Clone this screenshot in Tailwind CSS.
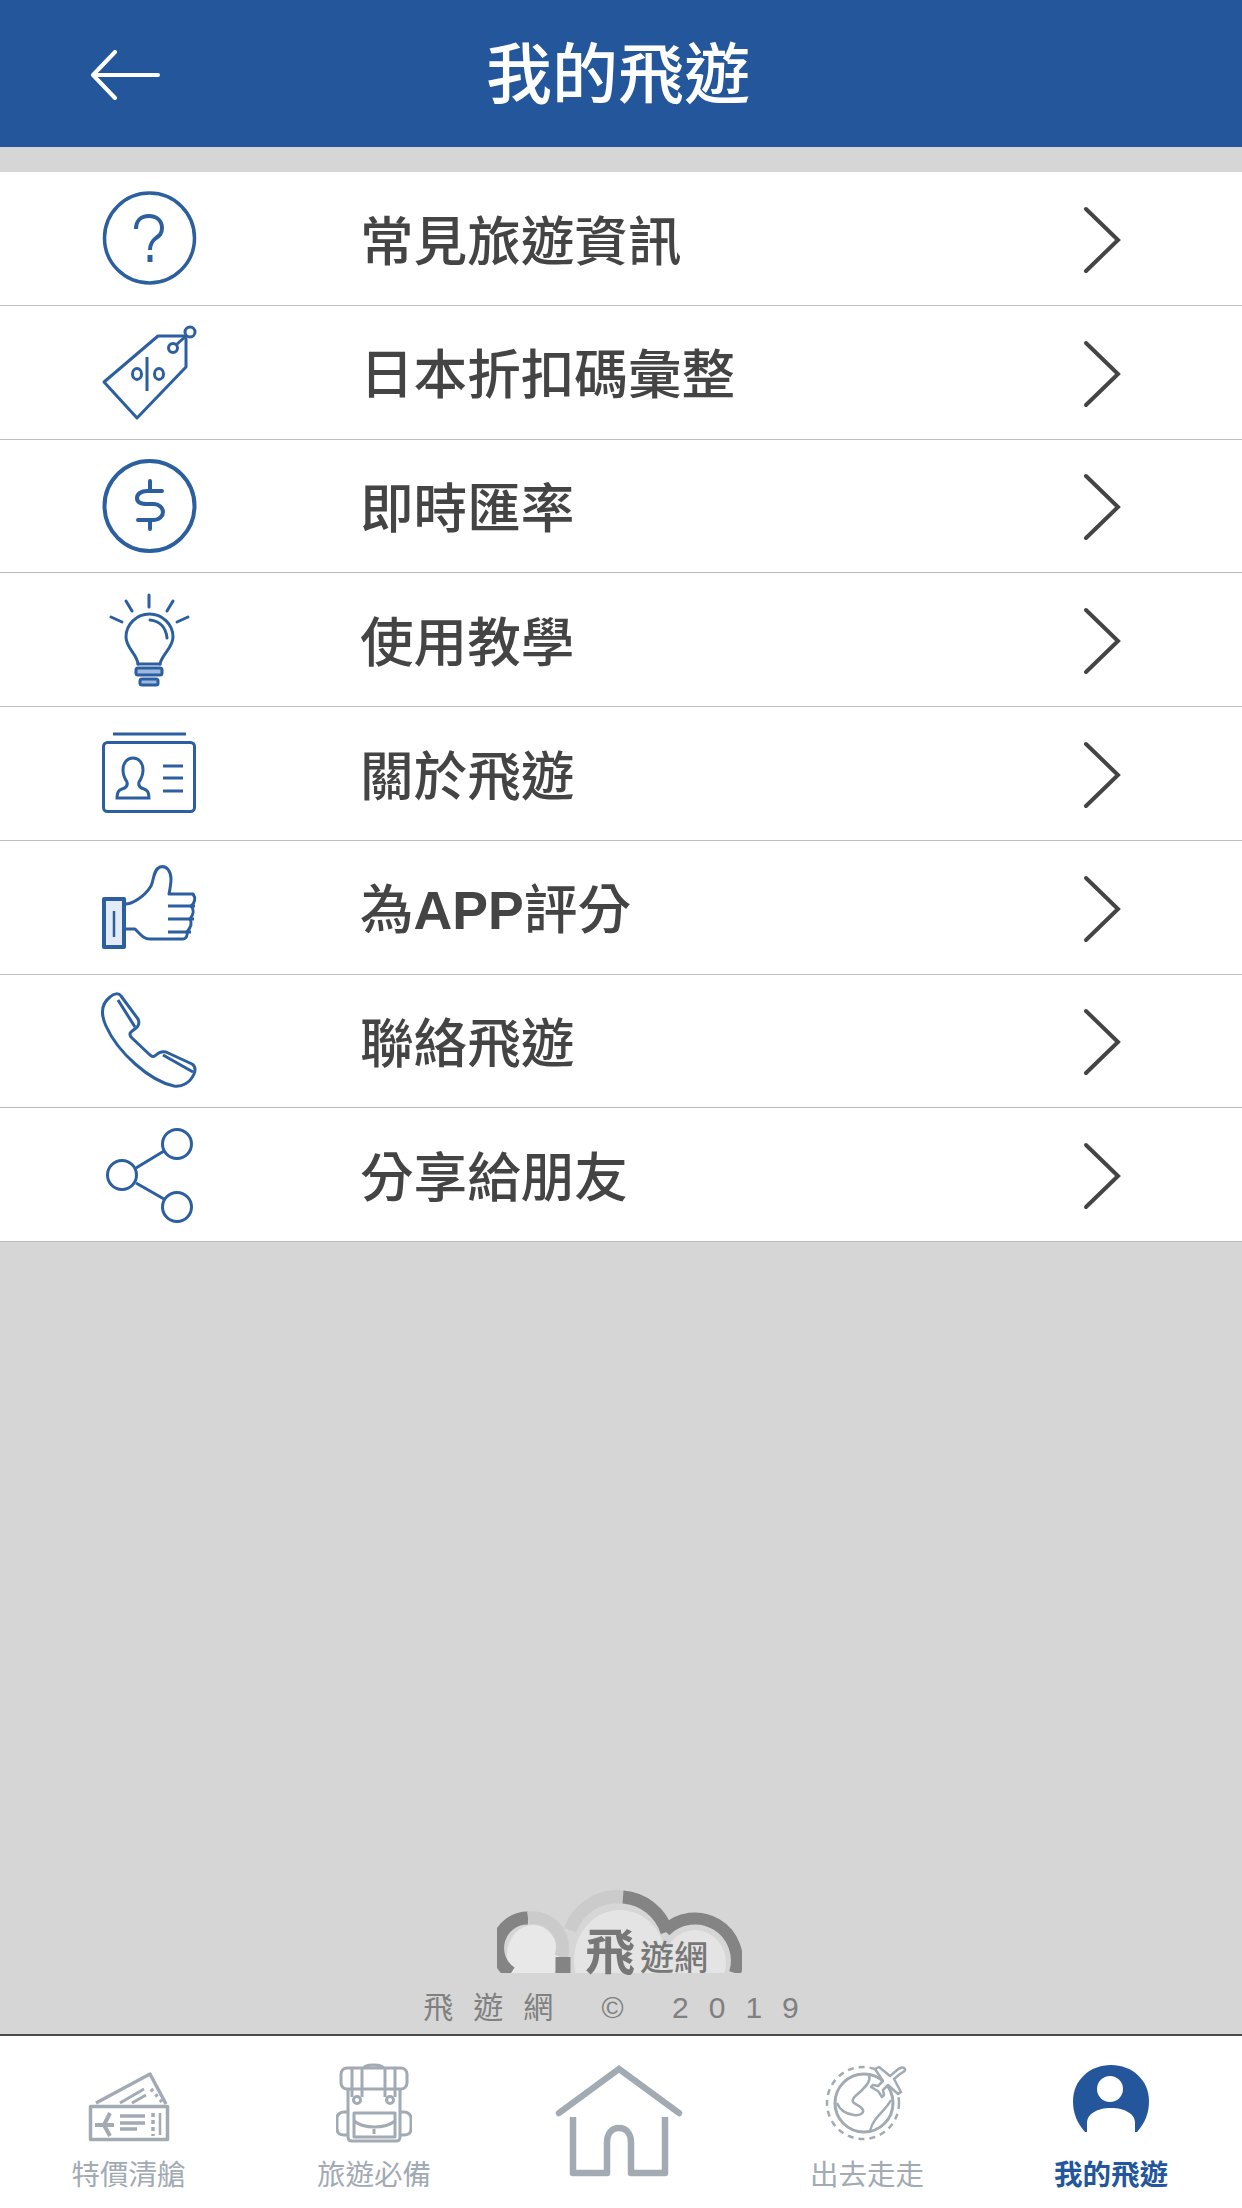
<!DOCTYPE html>
<html lang="zh-Hant">
<head>
  <meta charset="UTF-8" />
  <title>我的飛遊</title>
  <script src="https://cdn.jsdelivr.net/npm/@tailwindcss/browser@4"></script>
</head>
<body class="w-[1242px] h-[2208px] overflow-hidden bg-[#d6d6d6] font-['Liberation_Sans','Noto_Sans_CJK_TC',sans-serif]">
  <div class="flex flex-col h-[2208px]">

    <!-- header -->
    <header class="relative h-[147px] shrink-0 bg-[#23569b] flex items-center justify-center text-white">
      <svg class="absolute left-[90px] top-[50px] w-[70px] h-[50px]" viewBox="0 0 70 50" fill="none" stroke="#fff" stroke-width="4" stroke-linecap="round" stroke-linejoin="round"><path d="M68 25H3M25 2 3 25l22 23"/></svg>
      <h1 class="text-[66px] font-medium leading-none pt-[2px] -ml-[6px]">我的飛遊</h1>
    </header>

    <!-- menu -->
    <ul class="mt-[25px] bg-white shrink-0">
      <li class="h-[133.75px] flex items-center border-b border-[#bdbdbd]">
        <div class="w-[360px] pl-[100px] shrink-0">
          <svg class="block w-[100px] h-[100px]" viewBox="0 0 100 100" fill="none" stroke="#2c5f9f" stroke-width="3.5"><circle cx="49.5" cy="50" r="45"/><path d="M36 41c0-8 5-13 13-13s13 5 13 12c0 6-3 8-6 10-4 3-6 6-6 12" stroke-width="4"/><path d="M50 67v7" stroke-width="5"/></svg>
        </div>
        <span class="flex-1 text-[53.6px] text-[#444] font-medium leading-none pt-[8px]">常見旅遊資訊</span>
        <svg class="w-[40px] h-[70px] mr-[120px] mt-[3px]" viewBox="0 0 40 70" fill="none" stroke="#444" stroke-width="4" stroke-linecap="round"><path d="M4 4l32 31L4 66"/></svg>
      </li>
      <li class="h-[133.75px] flex items-center border-b border-[#bdbdbd]">
        <div class="w-[360px] pl-[100px] shrink-0">
          <svg class="block w-[100px] h-[100px]" viewBox="0 0 100 100" fill="none" stroke="#2c5f9f" stroke-width="3" stroke-linejoin="round"><path d="M58 14H84l2 3V45L37 96 4 60z"/><circle cx="73" cy="26" r="4.500"/><circle cx="90" cy="10" r="5"/><path d="M76 23l10-9"/><path d="M47 35v34"/><ellipse cx="37" cy="52" rx="4.500" ry="5.500"/><ellipse cx="59" cy="52" rx="4.500" ry="5.500"/></svg>
        </div>
        <span class="flex-1 text-[53.6px] text-[#444] font-medium leading-none pt-[8px]">日本折扣碼彙整</span>
        <svg class="w-[40px] h-[70px] mr-[120px] mt-[3px]" viewBox="0 0 40 70" fill="none" stroke="#444" stroke-width="4" stroke-linecap="round"><path d="M4 4l32 31L4 66"/></svg>
      </li>
      <li class="h-[133.75px] flex items-center border-b border-[#bdbdbd]">
        <div class="w-[360px] pl-[100px] shrink-0">
          <svg class="block w-[100px] h-[100px]" viewBox="0 0 100 100" fill="none" stroke="#2c5f9f" stroke-width="4" stroke-linecap="round"><circle cx="49.5" cy="50" r="45"/><path d="M62 35H47c-6 0-10 3-10 7s4 6 10 6h7c5 0 9 4 9 8s-4 8-9 8H38"/><path d="M50 25v10M50 64v9"/></svg>
        </div>
        <span class="flex-1 text-[53.6px] text-[#444] font-medium leading-none pt-[8px]">即時匯率</span>
        <svg class="w-[40px] h-[70px] mr-[120px] mt-[3px]" viewBox="0 0 40 70" fill="none" stroke="#444" stroke-width="4" stroke-linecap="round"><path d="M4 4l32 31L4 66"/></svg>
      </li>
      <li class="h-[133.75px] flex items-center border-b border-[#bdbdbd]">
        <div class="w-[360px] pl-[100px] shrink-0">
          <svg class="block w-[100px] h-[100px]" viewBox="0 0 100 100" fill="none" stroke="#2c5f9f" stroke-width="3" stroke-linecap="round"><path d="M49 5v12M26 11l6 10M73 11l-6 10M11 27l11 5M88 27l-11 5"/><path d="M38 74C37 64 26 58 26 47 26 34 37 24 49.500 24 62 24 73 34 73 47 73 58 62 64 60 74"/><path d="M50 30c10 1 16 8 17 18"/><path d="M38 74h22"/><rect x="36" y="78" width="26" height="7" rx="2" fill="#9db9dd"/><rect x="40" y="89" width="18" height="6" rx="2" fill="#9db9dd"/></svg>
        </div>
        <span class="flex-1 text-[53.6px] text-[#444] font-medium leading-none pt-[8px]">使用教學</span>
        <svg class="w-[40px] h-[70px] mr-[120px] mt-[3px]" viewBox="0 0 40 70" fill="none" stroke="#444" stroke-width="4" stroke-linecap="round"><path d="M4 4l32 31L4 66"/></svg>
      </li>
      <li class="h-[133.75px] flex items-center border-b border-[#bdbdbd]">
        <div class="w-[360px] pl-[100px] shrink-0">
          <svg class="block w-[100px] h-[100px]" viewBox="0 0 100 100" fill="none" stroke="#2c5f9f" stroke-width="3"><path d="M13 11h73"/><rect x="3.500" y="19.500" width="91" height="69" rx="4"/><path d="M43 47c0-7-4-12-10-12s-10 5-10 12c0 5 2 9 4 12 1 4-1 6-5 7-4 1-5 4-5 9h32c0-5-1-8-5-9-4-1-6-3-5-7 2-3 4-7 4-12z"/><path d="M63 43h20M63 55h20M63 68h20"/></svg>
        </div>
        <span class="flex-1 text-[53.6px] text-[#444] font-medium leading-none pt-[8px]">關於飛遊</span>
        <svg class="w-[40px] h-[70px] mr-[120px] mt-[3px]" viewBox="0 0 40 70" fill="none" stroke="#444" stroke-width="4" stroke-linecap="round"><path d="M4 4l32 31L4 66"/></svg>
      </li>
      <li class="h-[133.75px] flex items-center border-b border-[#bdbdbd]">
        <div class="w-[360px] pl-[100px] shrink-0">
          <svg class="block w-[100px] h-[100px]" viewBox="0 0 100 100" fill="none" stroke="#2c5f9f" stroke-width="3" stroke-linejoin="round"><rect x="4" y="42" width="20" height="48" fill="#e2ebf7" stroke-width="4"/><path d="M14 54v26" stroke-width="2.500"/><path d="M25 47c8 0 20-8 26-18 3-6 2-16 9-19 7-2 11 5 11 12 0 5-1 10-2 15h24c3 4 2 9-2 12 3 3 3 8-1 13 2 3 1 8-3 13 1 3-1 7-4 7H50c-6 0-9-4-15-10H25"/><path d="M68 49h27M68 62h26M68 75h23"/></svg>
        </div>
        <span class="flex-1 text-[53.6px] text-[#444] font-medium leading-none pt-[8px]">為<b class="font-bold">APP</b>評分</span>
        <svg class="w-[40px] h-[70px] mr-[120px] mt-[3px]" viewBox="0 0 40 70" fill="none" stroke="#444" stroke-width="4" stroke-linecap="round"><path d="M4 4l32 31L4 66"/></svg>
      </li>
      <li class="h-[133.75px] flex items-center border-b border-[#bdbdbd]">
        <div class="w-[360px] pl-[100px] shrink-0">
          <svg class="block w-[100px] h-[100px]" viewBox="0 0 100 100" fill="none" stroke="#2c5f9f" stroke-width="3" stroke-linejoin="round"><path d="M10 6C14 2 19 2 21 5L38 28C40 32 38 36 36 37L31 41C29 43 30 45 32 47L50 64C52 66 54 66 56 64 59 61 62 60 66 61L92 73C95 75 96 78 94 83 90 92 82 96 74 95 50 90 18 62 6 35 1 24 1 13 10 6Z"/><path d="M18 9 35 36M63 64l30 17"/></svg>
        </div>
        <span class="flex-1 text-[53.6px] text-[#444] font-medium leading-none pt-[8px]">聯絡飛遊</span>
        <svg class="w-[40px] h-[70px] mr-[120px] mt-[3px]" viewBox="0 0 40 70" fill="none" stroke="#444" stroke-width="4" stroke-linecap="round"><path d="M4 4l32 31L4 66"/></svg>
      </li>
      <li class="h-[133.75px] flex items-center border-b border-[#bdbdbd]">
        <div class="w-[360px] pl-[100px] shrink-0">
          <svg class="block w-[100px] h-[100px]" viewBox="0 0 100 100" fill="none" stroke="#2c5f9f" stroke-width="3"><circle cx="77" cy="19" r="14.500"/><circle cx="77" cy="82" r="14.500"/><circle cx="22" cy="50" r="14.500"/><path d="M36 43l28-17M36 58l28 16"/></svg>
        </div>
        <span class="flex-1 text-[53.6px] text-[#444] font-medium leading-none pt-[8px]">分享給朋友</span>
        <svg class="w-[40px] h-[70px] mr-[120px] mt-[3px]" viewBox="0 0 40 70" fill="none" stroke="#444" stroke-width="4" stroke-linecap="round"><path d="M4 4l32 31L4 66"/></svg>
      </li>
    </ul>

    <!-- brand -->
    <div class="flex-1 flex flex-col items-center justify-end pb-[5px]">
      <svg class="w-[245px] h-[83px] -ml-[3px] overflow-visible" viewBox="0 0 245 83" fill="none">
        <svg x="0" y="0" width="245" height="83" viewBox="0 0 245 83" fill="none">
          <ellipse cx="36" cy="65" rx="26" ry="30" fill="#e8e8e8"/>
          <ellipse cx="123" cy="70" rx="46" ry="50" fill="#e4e4e4"/>
          <ellipse cx="198" cy="73" rx="31" ry="33" fill="#e4e4e4"/>
          <path d="M14 83A30 30 0 0 1 31 28" stroke="#848484" stroke-width="13"/>
          <path d="M31 28A30 30 0 0 1 64 67" stroke="#cbcbcb" stroke-width="13"/>
          <path d="M66 67V83" stroke="#848484" stroke-width="15"/>
          <path d="M73 40A50 50 0 0 1 126 7" stroke="#cbcbcb" stroke-width="13"/>
          <path d="M126 7A50 50 0 0 1 170 42" stroke="#848484" stroke-width="13"/>
          <path d="M168 41A42 42 0 0 1 238 83" stroke="#848484" stroke-width="12"/>
        </svg>
        <text x="88" y="80" font-size="50" font-weight="700" fill="#777">飛</text>
        <text x="143" y="80" font-size="34" font-weight="500" fill="#777">遊網</text>
      </svg>
      <div class="text-[30px] leading-[42px] mt-[14px] tracking-[20px] text-[#808080] whitespace-nowrap">飛遊網 © 2019</div>
    </div>

    <!-- tab bar -->
    <nav class="h-[174px] shrink-0 bg-white border-t-2 border-[#4a4a4a] flex text-[28.500px] leading-none text-[#a2aab4]">
      <a class="w-[257px] flex flex-col items-center pt-[34px]">
        <svg class="w-[82px] h-[72px]" viewBox="0 0 82 72" fill="none" stroke="#a2aab4" stroke-width="3.500" stroke-linejoin="round"><path d="M2.500 36.500h77v33h-77zM8 33 62 4 78 34"/><path d="M32 33l24-14M44 33l14-8" stroke-width="3"/><path d="M63 19l11 13" stroke-dasharray="3 4"/><path d="M7 55h19M22 43l-6 12 6 11" stroke-width="4"/><path d="M32 46h25M32 53h25M32 59h17" stroke-width="3.500"/><path d="M65 43v23" stroke-dasharray="4 3"/><path d="M72 43v22" stroke-width="2.500"/></svg>
        <span class="mt-[19px]">特價清艙</span>
      </a>
      <a class="w-[234px] flex flex-col items-center pt-[27px]">
        <svg class="w-[76px] h-[80px]" viewBox="0 0 76 80" fill="none" stroke="#a2aab4" stroke-width="3" stroke-linejoin="round"><path d="M28 5c0-4 19-4 19 0"/><rect x="5" y="5" width="66" height="21" rx="6"/><path d="M12 26V74c0 2 1 4 4 4H60c3 0 4-2 4-4V26M12 49H8c-4 0-7 3-7 6V66c0 4 3 6 7 6h4M64 49h4c4 0 7 3 7 6V66c0 4-3 6-7 6H64"/><path d="M16 5V34M26 5V34M49 5V34M59 5V34"/><circle cx="21" cy="37" r="3.500"/><circle cx="54" cy="37" r="3.500"/><rect x="18" y="50" width="41" height="24"/><path d="M18 58c10 8 31 8 41 0M38 66v5"/></svg>
        <span class="mt-[18px]">旅遊必備</span>
      </a>
      <a class="w-[258px] flex flex-col items-center pt-[27px]">
        <svg class="w-[130px] h-[116px]" viewBox="0 0 130 116" fill="none" stroke="#a2aab4" stroke-width="6.500"><path d="M4 50 64 6l60 44" stroke-linecap="round"/><path d="M18 54V110H52V80c0-10 5-15 12-15s12 5 12 15V110H110V54" stroke-linejoin="round"/></svg>
      </a>
      <a class="w-[236px] flex flex-col items-center pt-[26px]">
        <svg class="w-[84px] h-[84px]" viewBox="0 0 84 84" fill="none" stroke="#a2aab4" stroke-width="2.500" stroke-linejoin="round"><circle cx="38" cy="41" r="36" stroke-dasharray="6 5"/><circle cx="39" cy="41" r="29" stroke-width="3"/><path d="M44 13c2 6-2 10-8 16-4 4-10 7-8 11 2 3 8 3 10 8 1 3-3 6-9 5-8-1-14-4-17-12"/><path d="M66 38c-4 8-12 14-16 20-3 4-4 7-5 11"/><path d="M80 7c-2-3-6-1-9 2L65 14 54 5 50 7 58 19 53 24 48 23 46 25 53 29 57 35 59 33 58 28 63 23 73 32 76 30 69 17 75 12c3-2 6-3 5-5z" fill="#fff"/></svg>
        <span class="mt-[15px]">出去走走</span>
      </a>
      <a class="w-[252px] flex flex-col items-center pt-[29px] text-[#23569b] font-bold">
        <svg class="w-[76px] h-[68px]" viewBox="0 0 76 68"><path d="M12 67C4 58 0 48 0 36 0 15 17 0 38 0S76 15 76 36C76 48 72 58 64 67Z" fill="#23569b"/><ellipse cx="37" cy="24" rx="13" ry="13" fill="#fff"/><path d="M14 68V58C14 49 24 43 38 43S62 49 62 58V68Z" fill="#fff"/></svg>
        <span class="mt-[28px]">我的飛遊</span>
      </a>
    </nav>
  </div>
</body>
</html>
